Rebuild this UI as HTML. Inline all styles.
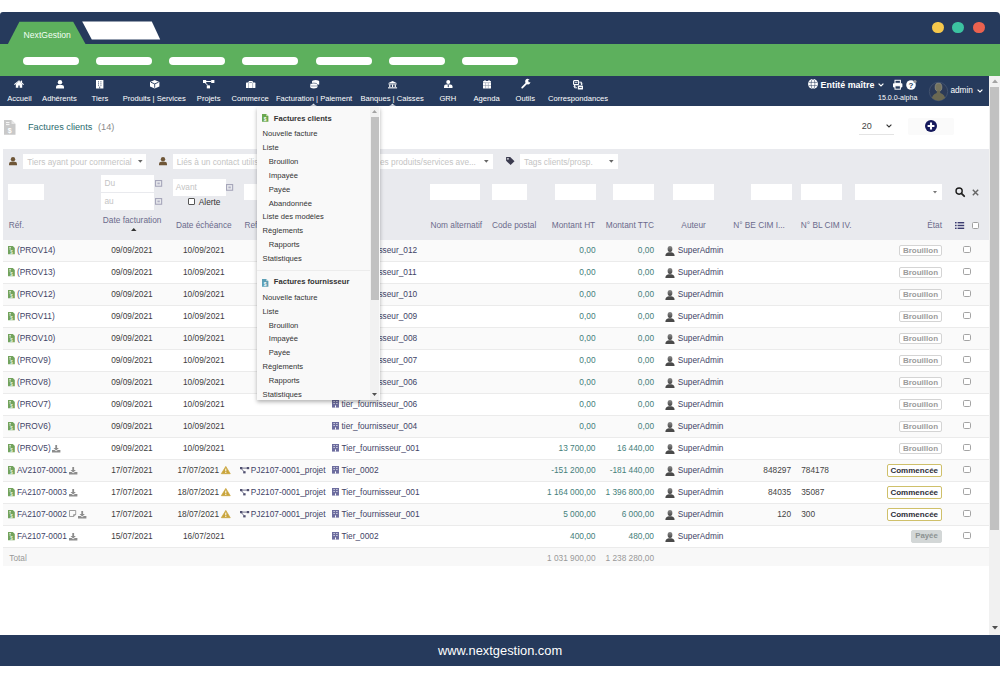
<!DOCTYPE html><html><head><meta charset="utf-8"><title>NextGestion</title><style>
html,body{margin:0;padding:0;background:#fff;width:1000px;height:679px;overflow:hidden}
#root{position:relative;width:1000px;height:679px;overflow:hidden;font-family:"Liberation Sans", sans-serif}
.a{position:absolute}
.t{position:absolute;line-height:1;white-space:nowrap;font-family:"Liberation Sans", sans-serif}
.badge{position:absolute;box-sizing:border-box;border-radius:2px;font-family:"Liberation Sans", sans-serif;font-weight:bold;font-size:7.8px;line-height:10px;text-align:center;white-space:nowrap}
svg{overflow:visible}
</style></head><body><div id="root"><div class="a" style="left:0px;top:12px;width:1000px;height:32px;background:#263a5c;border-radius:3px 4px 0 0"></div>
<svg class="a" style="left:0px;top:12px;" width="200" height="33" viewBox="0 0 200 33"><path d="M7.9,32 L19.4,9.8 L73.2,9.8 L85.5,32 Z" fill="#5db05d"/><path d="M82.2,9.6 L151.8,9.6 L160.2,27.4 L91.8,27.4 Z" fill="#fff"/></svg>
<div class="t" style="left:23.60px;top:30.82px;font-size:8.6px;color:#f2fff2;font-weight:normal;">NextGestion</div>
<div class="a" style="left:932.2px;top:21.8px;width:11.599999999999909px;height:11.599999999999998px;background:#f6c84c;border-radius:50%"></div>
<div class="a" style="left:952.2px;top:21.8px;width:11.599999999999909px;height:11.599999999999998px;background:#3cc3a1;border-radius:50%"></div>
<div class="a" style="left:973.4000000000001px;top:21.8px;width:11.599999999999909px;height:11.599999999999998px;background:#ec624f;border-radius:50%"></div>
<div class="a" style="left:0px;top:43.5px;width:1000px;height:32.0px;background:#5db05d"></div>
<div class="a" style="left:22.5px;top:57px;width:56.0px;height:8px;background:#fff;border-radius:4px"></div>
<div class="a" style="left:95.8px;top:57px;width:56.000000000000014px;height:8px;background:#fff;border-radius:4px"></div>
<div class="a" style="left:169.1px;top:57px;width:56.0px;height:8px;background:#fff;border-radius:4px"></div>
<div class="a" style="left:242.4px;top:57px;width:55.99999999999997px;height:8px;background:#fff;border-radius:4px"></div>
<div class="a" style="left:315.7px;top:57px;width:56.0px;height:8px;background:#fff;border-radius:4px"></div>
<div class="a" style="left:389.0px;top:57px;width:56.0px;height:8px;background:#fff;border-radius:4px"></div>
<div class="a" style="left:462.3px;top:57px;width:55.99999999999994px;height:8px;background:#fff;border-radius:4px"></div>
<div class="a" style="left:0px;top:76px;width:989px;height:30px;background:#263a5c"></div>
<svg class="a" style="left:14.1px;top:80.4px;" width="10" height="7.8" viewBox="0 0 10 7.8"><path d="M5,0.2 L10,4.3 L9.3,5 L5,1.6 L0.7,5 L0,4.3 Z" fill="#ffffff"/><path d="M1.8,4 L5,1.5 L8.2,4 L8.2,7.8 L5.7,7.8 L5.7,5.5 L4.3,5.5 L4.3,7.8 L1.8,7.8 Z" fill="#ffffff"/><rect x="6.9" y="0.6" width="1.2" height="2.4" fill="#ffffff"/></svg>
<svg class="a" style="left:55.6px;top:80.2px;" width="8" height="8.5" viewBox="0 0 8 8.5"><circle cx="4" cy="2.2" r="2.2" fill="#ffffff"/><path d="M0,8.5 L0,7 Q0,4.9 2.2,4.9 L5.8,4.9 Q8,4.9 8,7 L8,8.5 Z" fill="#ffffff"/></svg>
<svg class="a" style="left:96px;top:80.1px;" width="7.4" height="8.5" viewBox="0 0 7.4 8.5"><rect x="0" y="0" width="7.4" height="8.5" fill="#ffffff"/><g fill="#263a5c" opacity="0.8"><rect x="2" y="1.3" width="1" height="1.1"/><rect x="4.4" y="1.3" width="1" height="1.1"/><rect x="2" y="3.3" width="1" height="1.1"/><rect x="4.4" y="3.3" width="1" height="1.1"/><rect x="2" y="5.2" width="0.9" height="0.9"/><rect x="4.5" y="5.2" width="0.9" height="0.9"/><rect x="3.2" y="6.6" width="1" height="1.9"/></g></svg>
<svg class="a" style="left:149.8px;top:80.2px;" width="9.4" height="8.4" viewBox="0 0 9.4 8.4"><path d="M4.7,0 L9.4,2 L9.4,6.4 L4.7,8.4 L0,6.4 L0,2 Z" fill="#ffffff"/><path d="M0.8,2.2 L4.7,3.9 L8.6,2.2 M4.7,3.9 L4.7,7.8" stroke="#263a5c" stroke-width="0.9" fill="none"/></svg>
<svg class="a" style="left:203px;top:80.2px;" width="11.4" height="8.4" viewBox="0 0 11.4 8.4"><rect x="0" y="0" width="3.2" height="3" fill="#ffffff"/><rect x="8.2" y="0" width="3.2" height="3" fill="#ffffff"/><rect x="3.8" y="5.4" width="3.2" height="3" fill="#ffffff"/><path d="M3,1.5 L8.3,1.5 M2,2.6 L5,5.6" stroke="#ffffff" stroke-width="1"/></svg>
<svg class="a" style="left:245.6px;top:81.2px;" width="9.4" height="7" viewBox="0 0 9.4 7"><rect x="0" y="1.6" width="9.4" height="5.4" rx="0.6" fill="#ffffff"/><path d="M3,1.8 L3,0.5 L6.4,0.5 L6.4,1.8" stroke="#ffffff" stroke-width="1" fill="none"/><rect x="2.3" y="2" width="0.7" height="5" fill="#263a5c" opacity="0.5"/><rect x="6.4" y="2" width="0.7" height="5" fill="#263a5c" opacity="0.5"/></svg>
<svg class="a" style="left:309.6px;top:80.2px;" width="9.4" height="8.4" viewBox="0 0 9.4 8.4"><ellipse cx="5.6" cy="1.6" rx="3.6" ry="1.6" fill="#ffffff"/><rect x="2" y="1.6" width="7.2" height="3" fill="#ffffff"/><ellipse cx="3.8" cy="4.6" rx="3.6" ry="1.5" fill="#ffffff" stroke="#263a5c" stroke-width="0.6"/><rect x="0.2" y="4.6" width="7.2" height="2.4" fill="#ffffff"/><ellipse cx="3.8" cy="7" rx="3.6" ry="1.4" fill="#ffffff"/><path d="M0.3,6 L7.3,6" stroke="#263a5c" stroke-width="0.5"/></svg>
<svg class="a" style="left:387.7px;top:80.8px;" width="9.1" height="7.4" viewBox="0 0 9.1 7.4"><path d="M4.55,0 L9.1,2.2 L0,2.2 Z" fill="#ffffff"/><rect x="0.5" y="2.6" width="8.1" height="0.9" fill="#ffffff"/><rect x="1.2" y="3.5" width="1.2" height="2.6" fill="#ffffff"/><rect x="3.95" y="3.5" width="1.2" height="2.6" fill="#ffffff"/><rect x="6.7" y="3.5" width="1.2" height="2.6" fill="#ffffff"/><rect x="0" y="6.3" width="9.1" height="1.1" fill="#ffffff"/></svg>
<svg class="a" style="left:443.8px;top:80.4px;" width="8.5" height="8.1" viewBox="0 0 8.5 8.1"><circle cx="4.25" cy="2" r="2" fill="#ffffff"/><path d="M0,8.1 L0,6.6 Q0,4.5 2,4.5 L6.5,4.5 Q8.5,4.5 8.5,6.6 L8.5,8.1 Z" fill="#ffffff"/><path d="M4.25,4.6 L3.5,6 L4.25,7.6 L5,6 Z" fill="#263a5c"/></svg>
<svg class="a" style="left:483px;top:80px;" width="8" height="8.5" viewBox="0 0 8 8.5"><rect x="0" y="1" width="8" height="7.5" rx="0.5" fill="#ffffff"/><rect x="1.5" y="0" width="1" height="1.6" fill="#ffffff"/><rect x="5.5" y="0" width="1" height="1.6" fill="#ffffff"/><path d="M0,2.6 L8,2.6 M2.6,3 L2.6,8.5 M5.3,3 L5.3,8.5 M0,5.5 L8,5.5" stroke="#263a5c" stroke-width="0.5" opacity="0.6"/></svg>
<svg class="a" style="left:520.6px;top:80px;" width="9.6" height="8.5" viewBox="0 0 9.6 8.5"><path d="M1.2,7.6 L5.4,3.4" stroke="#ffffff" stroke-width="1.8" stroke-linecap="round"/><path d="M5.4,3.4 A2.4,2.4 0 1 1 8.9,1.8 L7.6,2.9 L6.7,2.1 L7.6,1 A2.4,2.4 0 0 0 5.4,3.4 Z" fill="#ffffff"/><circle cx="7" cy="2.3" r="2.2" fill="#ffffff"/><path d="M7.2,0 L9.6,0 L9.6,2.2 L7.6,2.2 Z" fill="#263a5c"/></svg>
<svg class="a" style="left:573.4px;top:80.2px;" width="10.4" height="10" viewBox="0 0 10.4 10"><rect x="0.6" y="0.6" width="5" height="4" rx="0.6" fill="none" stroke="#ffffff" stroke-width="1.1"/><path d="M1.8,2.6 L4.4,2.6" stroke="#ffffff" stroke-width="0.8"/><path d="M6.4,2.2 L8.6,2.2 L8.6,4.6 M7.7,3.7 L8.6,4.8 L9.5,3.7" stroke="#ffffff" stroke-width="1" fill="none"/><rect x="4.8" y="5.4" width="5.2" height="4.2" rx="0.6" fill="#ffffff"/><path d="M6,7.5 L8.8,7.5" stroke="#263a5c" stroke-width="0.8"/><path d="M4,7.8 L1.6,7.8 L1.6,5.4 M0.7,6.5 L1.6,5.3 L2.5,6.5" stroke="#ffffff" stroke-width="1" fill="none"/></svg>
<div class="t" style="left:-180.60px;width:400px;text-align:center;top:95.07px;font-size:7.6px;color:#fff;font-weight:normal;">Accueil</div>
<div class="t" style="left:-140.60px;width:400px;text-align:center;top:95.07px;font-size:7.6px;color:#fff;font-weight:normal;">Adhérents</div>
<div class="t" style="left:-100.10px;width:400px;text-align:center;top:95.07px;font-size:7.6px;color:#fff;font-weight:normal;">Tiers</div>
<div class="t" style="left:-45.75px;width:400px;text-align:center;top:95.07px;font-size:7.6px;color:#fff;font-weight:normal;">Produits | Services</div>
<div class="t" style="left:8.70px;width:400px;text-align:center;top:95.07px;font-size:7.6px;color:#fff;font-weight:normal;">Projets</div>
<div class="t" style="left:50.10px;width:400px;text-align:center;top:95.07px;font-size:7.6px;color:#fff;font-weight:normal;">Commerce</div>
<div class="t" style="left:114.10px;width:400px;text-align:center;top:95.07px;font-size:7.6px;color:#fff;font-weight:normal;">Facturation | Paiement</div>
<div class="t" style="left:192.10px;width:400px;text-align:center;top:95.07px;font-size:7.6px;color:#fff;font-weight:normal;">Banques | Caisses</div>
<div class="t" style="left:247.90px;width:400px;text-align:center;top:95.07px;font-size:7.6px;color:#fff;font-weight:normal;">GRH</div>
<div class="t" style="left:286.60px;width:400px;text-align:center;top:95.07px;font-size:7.6px;color:#fff;font-weight:normal;">Agenda</div>
<div class="t" style="left:325.25px;width:400px;text-align:center;top:95.07px;font-size:7.6px;color:#fff;font-weight:normal;">Outils</div>
<div class="t" style="left:378.00px;width:400px;text-align:center;top:95.07px;font-size:7.6px;color:#fff;font-weight:normal;">Correspondances</div>
<svg class="a" style="left:310.3px;top:103.2px;" width="7" height="2.8" viewBox="0 0 7 2.8"><path d="M0,2.8 Q2.2,2.4 3.5,0.6 Q4.8,2.4 7,2.8 Z" fill="#e6e9ee"/></svg>
<svg class="a" style="left:388.9px;top:103.2px;" width="7" height="2.8" viewBox="0 0 7 2.8"><path d="M0,2.8 Q2.2,2.4 3.5,0.6 Q4.8,2.4 7,2.8 Z" fill="#e6e9ee"/></svg>
<svg class="a" style="left:808.2px;top:79px;" width="10" height="10" viewBox="0 0 10 10"><circle cx="5" cy="5" r="4.95" fill="#fff"/><path d="M0.8,3.4 L9.2,3.4 M0.8,6.6 L9.2,6.6" stroke="#263a5c" stroke-width="0.7" opacity="0.75"/><ellipse cx="5" cy="5" rx="1.9" ry="4.9" fill="none" stroke="#263a5c" stroke-width="0.7" opacity="0.75"/></svg>
<div class="t" style="left:820.60px;top:80.97px;font-size:8.9px;color:#fff;font-weight:bold;">Entité maître</div>
<svg class="a" style="left:878px;top:83.2px;" width="6" height="4" viewBox="0 0 6 4"><path d="M0.6,0.6 L3,3 L5.4,0.6" stroke="#fff" stroke-width="1.2" fill="none"/></svg>
<svg class="a" style="left:893px;top:79.6px;" width="9.4" height="9.4" viewBox="0 0 9.4 9.4"><rect x="2" y="0.3" width="5.4" height="3" fill="none" stroke="#fff" stroke-width="1"/><rect x="0" y="3.2" width="9.4" height="4.2" rx="0.8" fill="#fff"/><rect x="2" y="5.8" width="5.4" height="3.4" fill="#263a5c" stroke="#fff" stroke-width="1"/></svg>
<svg class="a" style="left:906px;top:79.6px;" width="10" height="10" viewBox="0 0 10 10"><circle cx="5" cy="5" r="4.8" fill="#fff"/><text x="5" y="8.3" text-anchor="middle" font-family="Liberation Sans" font-weight="bold" font-size="8" fill="#263a5c">?</text><circle cx="9" cy="1.5" r="1.6" fill="#999"/></svg>
<div class="t" style="left:878.00px;top:94.99px;font-size:7.1px;color:#fff;font-weight:normal;">15.0.0-alpha</div>
<svg class="a" style="left:929px;top:81.5px;" width="19" height="19" viewBox="0 0 19 19"><defs><clipPath id="av"><circle cx="9.5" cy="9.5" r="9.2"/></clipPath></defs><circle cx="9.5" cy="9.5" r="9.2" fill="#2b3a57" stroke="#4b5a76" stroke-width="0.7"/><g clip-path="url(#av)"><ellipse cx="9.5" cy="5.2" rx="3.4" ry="4.1" fill="#75735e" stroke="#9a9a90" stroke-width="0.6"/><path d="M8,8.5 L11,8.5 L11.3,11 Q16,12 16.8,19 L2.2,19 Q3,12 7.7,11 Z" fill="#6a6852"/></g></svg>
<div class="t" style="left:950.40px;top:85.97px;font-size:8.3px;color:#fff;font-weight:normal;">admin</div>
<svg class="a" style="left:977px;top:89px;" width="6" height="4" viewBox="0 0 6 4"><path d="M0.6,0.6 L3,3 L5.4,0.6" stroke="#fff" stroke-width="1.2" fill="none"/></svg>
<div class="a" style="left:989px;top:75.5px;width:11px;height:559.0px;background:#f1f1f1"></div>
<div class="a" style="left:990px;top:86.5px;width:9px;height:443.0px;background:#c1c1c1"></div>
<svg class="a" style="left:991.5px;top:79.4px;" width="6" height="4" viewBox="0 0 6 4"><path d="M0,4 L3,0.5 L6,4 Z" fill="#a3a3a3"/></svg>
<svg class="a" style="left:991.5px;top:626px;" width="6" height="4" viewBox="0 0 6 4"><path d="M0,0 L3,3.5 L6,0 Z" fill="#505050"/></svg>
<div class="a" style="left:0px;top:635px;width:1000px;height:31px;background:#263a5c"></div>
<div class="t" style="left:300.00px;width:400px;text-align:center;top:645.12px;font-size:12.85px;color:#fff;font-weight:normal;">www.nextgestion.com</div>
<svg class="a" style="left:3.9px;top:119.9px;" width="11.5" height="14.7" viewBox="0 0 11.5 14.7"><path d="M0,0 L7.5,0 L11.5,4 L11.5,14.7 L0,14.7 Z" fill="#c9c9c9"/><path d="M7.5,0 L7.5,4 L11.5,4" fill="#e6e6e6"/><rect x="2" y="2.2" width="3.5" height="0.9" fill="#fff"/><rect x="2" y="4.2" width="3.5" height="0.9" fill="#fff"/><text x="5.8" y="12.6" text-anchor="middle" font-family="Liberation Sans" font-weight="bold" font-size="7" fill="#fff">$</text></svg>
<div class="t" style="left:28.00px;top:123.11px;font-size:9.2px;color:#2c6b6e;font-weight:normal;">Factures clients</div>
<div class="t" style="left:98.00px;top:123.11px;font-size:9.2px;color:#8a8a8a;font-weight:normal;">(14)</div>
<div class="t" style="left:861.70px;top:121.58px;font-size:9px;color:#444;font-weight:normal;">20</div>
<svg class="a" style="left:886px;top:123.5px;" width="6" height="4" viewBox="0 0 6 4"><path d="M0.6,0.6 L3,3 L5.4,0.6" stroke="#333" stroke-width="1.1" fill="none"/></svg>
<div class="a" style="left:859px;top:133.8px;width:35px;height:0.799999999999983px;background:#e4e4e4"></div>
<div class="a" style="left:908px;top:117.8px;width:46px;height:16.799999999999997px;background:#fafafa;border-radius:2px"></div>
<svg class="a" style="left:925px;top:119.5px;" width="12" height="12" viewBox="0 0 12 12"><circle cx="6" cy="6" r="6" fill="#15195c"/><path d="M6,2.6 L6,9.4 M2.6,6 L9.4,6" stroke="#fff" stroke-width="2.1"/></svg>
<div class="a" style="left:3px;top:149px;width:985.5px;height:91px;background:#e9eaee"></div>
<svg class="a" style="left:8.75px;top:156.8px;" width="8" height="8.2" viewBox="0 0 8 8.2"><circle cx="4" cy="2.2" r="2.2" fill="#6f5637"/><path d="M0,8.2 L0,7 Q0,4.8 2.2,4.8 L5.8,4.8 Q8,4.8 8,7 L8,8.2 Z" fill="#6f5637"/></svg>
<svg class="a" style="left:158.9px;top:156.8px;" width="8" height="8.2" viewBox="0 0 8 8.2"><circle cx="4" cy="2.2" r="2.2" fill="#6f5637"/><path d="M0,8.2 L0,7 Q0,4.8 2.2,4.8 L5.8,4.8 Q8,4.8 8,7 L8,8.2 Z" fill="#6f5637"/></svg>
<div class="a" style="left:23.25px;top:153.6px;width:123.0px;height:15.200000000000017px;background:#fff"></div>
<div class="t" style="left:27.25px;top:157.97px;font-size:8.3px;color:#c4c4c4;font-weight:normal;">Tiers ayant pour commercial</div>
<svg class="a" style="left:137.75px;top:159.89999999999998px;" width="4.6" height="2.8" viewBox="0 0 4.6 2.8"><path d="M0,0 L4.6,0 L2.3,2.8 Z" fill="#666"/></svg>
<div class="a" style="left:173.3px;top:153.6px;width:83.69999999999999px;height:15.200000000000017px;background:#fff"></div>
<div class="t" style="left:176.70px;top:157.97px;font-size:8.3px;color:#c4c4c4;font-weight:normal;">Liés à un contact utilisateur</div>
<div class="a" style="left:257px;top:153.6px;width:235.8px;height:15.200000000000017px;background:#fff"></div>
<svg class="a" style="left:484.3px;top:160.3px;" width="4.6" height="2.8" viewBox="0 0 4.6 2.8"><path d="M0,0 L4.6,0 L2.3,2.8 Z" fill="#666"/></svg>
<div class="t" style="left:380.00px;top:157.97px;font-size:8.3px;color:#c4c4c4;font-weight:normal;">es produits/services ave...</div>
<svg class="a" style="left:505.6px;top:157px;" width="9" height="8" viewBox="0 0 9 8.2"><path d="M0,0 L4.2,0 L8.6,4.4 L4.6,8.2 L0,3.8 Z" fill="#3b3b4f"/><circle cx="1.9" cy="1.9" r="0.9" fill="#e9eaee"/></svg>
<div class="a" style="left:520px;top:153.8px;width:97.89999999999998px;height:15.199999999999989px;background:#fff"></div>
<div class="t" style="left:524.00px;top:158.17px;font-size:8.3px;color:#c4c4c4;font-weight:normal;">Tags clients/prosp.</div>
<svg class="a" style="left:609.4px;top:160.1px;" width="4.6" height="2.8" viewBox="0 0 4.6 2.8"><path d="M0,0 L4.6,0 L2.3,2.8 Z" fill="#666"/></svg>
<div class="a" style="left:8.25px;top:183.9px;width:36.0px;height:16.099999999999994px;background:#fff"></div>
<div class="a" style="left:100.75px;top:174.8px;width:53.55000000000001px;height:17.0px;background:#fff"></div>
<div class="t" style="left:104.50px;top:179.17px;font-size:8.3px;color:#c4c4c4;font-weight:normal;">Du</div>
<div class="a" style="left:100.75px;top:193px;width:53.55000000000001px;height:16.599999999999994px;background:#fff"></div>
<div class="t" style="left:104.50px;top:196.57px;font-size:8.3px;color:#c4c4c4;font-weight:normal;">au</div>
<svg class="a" style="left:154.9px;top:179.9px;" width="7.2" height="6.8" viewBox="0 0 7.2 6.8"><rect x="0.55" y="0.55" width="6.1" height="5.7" fill="none" stroke="#a6a6ba" stroke-width="1.1"/><rect x="2.4" y="2.5" width="2.4" height="1.8" fill="#b0b0c4"/></svg>
<svg class="a" style="left:154.9px;top:198.4px;" width="7.2" height="6.8" viewBox="0 0 7.2 6.8"><rect x="0.55" y="0.55" width="6.1" height="5.7" fill="none" stroke="#a6a6ba" stroke-width="1.1"/><rect x="2.4" y="2.5" width="2.4" height="1.8" fill="#b0b0c4"/></svg>
<div class="a" style="left:173px;top:178.5px;width:52.5px;height:17.0px;background:#fff"></div>
<div class="t" style="left:175.80px;top:183.17px;font-size:8.3px;color:#c4c4c4;font-weight:normal;">Avant</div>
<svg class="a" style="left:226.3px;top:183.6px;" width="7.2" height="6.8" viewBox="0 0 7.2 6.8"><rect x="0.55" y="0.55" width="6.1" height="5.7" fill="none" stroke="#a6a6ba" stroke-width="1.1"/><rect x="2.4" y="2.5" width="2.4" height="1.8" fill="#b0b0c4"/></svg>
<div class="a" style="left:188.3px;top:198px;width:6.699999999999989px;height:6.900000000000006px;background:#fff;border:0.8px solid #555;border-radius:1px;box-sizing:border-box"></div>
<div class="t" style="left:198.80px;top:197.87px;font-size:8.3px;color:#333;font-weight:normal;">Alerte</div>
<div class="a" style="left:244px;top:183.9px;width:56px;height:16.099999999999994px;background:#fff"></div>
<div class="a" style="left:430px;top:183.9px;width:50px;height:16.099999999999994px;background:#fff"></div>
<div class="a" style="left:491.75px;top:183.9px;width:35.25px;height:16.099999999999994px;background:#fff"></div>
<div class="a" style="left:554.5px;top:183.9px;width:41.700000000000045px;height:16.099999999999994px;background:#fff"></div>
<div class="a" style="left:613.2px;top:183.9px;width:40.799999999999955px;height:16.099999999999994px;background:#fff"></div>
<div class="a" style="left:673.2px;top:183.9px;width:40.799999999999955px;height:16.099999999999994px;background:#fff"></div>
<div class="a" style="left:750.8px;top:183.9px;width:41.200000000000045px;height:16.099999999999994px;background:#fff"></div>
<div class="a" style="left:800.8px;top:183.9px;width:41.200000000000045px;height:16.099999999999994px;background:#fff"></div>
<div class="a" style="left:854.8px;top:184px;width:87.20000000000005px;height:16px;background:#fff"></div>
<svg class="a" style="left:932.5px;top:191px;" width="4" height="2.4" viewBox="0 0 4 2.4"><path d="M0,0 L4,0 L2,2.4 Z" fill="#777"/></svg>
<svg class="a" style="left:955px;top:187px;" width="10" height="10" viewBox="0 0 10 10"><circle cx="4.1" cy="4.1" r="3.1" fill="none" stroke="#1a1a1a" stroke-width="1.35"/><path d="M6.4,6.4 L9.2,9.2" stroke="#222" stroke-width="1.8" stroke-linecap="round"/></svg>
<svg class="a" style="left:972.4px;top:189.1px;" width="7" height="7" viewBox="0 0 7 7"><path d="M0.8,0.8 L6.2,6.2 M6.2,0.8 L0.8,6.2" stroke="#666" stroke-width="1.4"/></svg>
<div class="t" style="left:8.75px;top:220.97px;font-size:8.3px;color:#6b6b8c;font-weight:normal;">Réf.</div>
<div class="t" style="left:102.80px;top:216.07px;font-size:8.3px;color:#6b6b8c;font-weight:normal;">Date facturation</div>
<svg class="a" style="left:130.5px;top:228px;" width="5.5" height="3" viewBox="0 0 5.5 3"><path d="M0,3 L2.75,0 L5.5,3 Z" fill="#333"/></svg>
<div class="t" style="left:175.90px;top:220.77px;font-size:8.3px;color:#6b6b8c;font-weight:normal;">Date échéance</div>
<div class="t" style="left:244.40px;top:220.77px;font-size:8.3px;color:#6b6b8c;font-weight:normal;">Ref. client</div>
<div class="t" style="left:430.50px;top:220.97px;font-size:8.3px;color:#6b6b8c;font-weight:normal;">Nom alternatif</div>
<div class="t" style="left:492.00px;top:220.97px;font-size:8.3px;color:#6b6b8c;font-weight:normal;">Code postal</div>
<div class="t" style="right:404.80px;top:220.97px;font-size:8.3px;color:#6b6b8c;font-weight:normal;">Montant HT</div>
<div class="t" style="right:346.00px;top:220.97px;font-size:8.3px;color:#6b6b8c;font-weight:normal;">Montant TTC</div>
<div class="t" style="left:493.60px;width:400px;text-align:center;top:220.97px;font-size:8.3px;color:#6b6b8c;font-weight:normal;">Auteur</div>
<div class="t" style="left:733.20px;top:220.97px;font-size:8.3px;color:#6b6b8c;font-weight:normal;">N° BE CIM I...</div>
<div class="t" style="left:800.80px;top:220.97px;font-size:8.3px;color:#6b6b8c;font-weight:normal;">N° BL CIM IV.</div>
<div class="t" style="right:58.00px;top:220.97px;font-size:8.3px;color:#6b6b8c;font-weight:normal;">État</div>
<svg class="a" style="left:954.8px;top:222px;" width="9.2" height="7" viewBox="0 0 9.2 7"><rect x="0" y="0" width="1.6" height="1.4" fill="#3c3c70"/><rect x="2.6" y="0" width="6.6" height="1.4" fill="#3c3c70"/><rect x="0" y="2.8" width="1.6" height="1.4" fill="#3c3c70"/><rect x="2.6" y="2.8" width="6.6" height="1.4" fill="#3c3c70"/><rect x="0" y="5.6" width="1.6" height="1.4" fill="#3c3c70"/><rect x="2.6" y="5.6" width="6.6" height="1.4" fill="#3c3c70"/></svg>
<div class="a" style="left:972px;top:222.3px;width:6.600000000000023px;height:6.699999999999989px;background:#fff;border:1px solid #a0a0a0;border-radius:1.5px;box-sizing:border-box"></div>
<div class="a" style="left:3px;top:240px;width:985.5px;height:22px;background:#fafafa;border-bottom:1px solid #ebebeb;box-sizing:border-box"></div>
<svg class="a" style="left:8.2px;top:245.5px;" width="6.8" height="8.2" viewBox="0 0 6.8 8.2"><path d="M0,0 L4.8,0 L6.8,2 L6.8,8.2 L0,8.2 Z" fill="#72a35c"/><rect x="1.2" y="1.2" width="1.8" height="0.8" fill="#e6f0e0"/><rect x="1.2" y="2.6" width="1.8" height="0.8" fill="#e6f0e0"/><text x="3.6" y="7.6" text-anchor="middle" font-family="Liberation Sans" font-weight="bold" font-size="4.6" fill="#e6f0e0">$</text></svg>
<div class="t" style="left:17.00px;top:246.27px;font-size:8.3px;color:#414366;font-weight:normal;">(PROV14)</div>
<div class="t" style="left:-68.10px;width:400px;text-align:center;top:246.27px;font-size:8.3px;color:#3d3d3d;font-weight:normal;">09/09/2021</div>
<div class="t" style="left:3.75px;width:400px;text-align:center;top:246.27px;font-size:8.3px;color:#3d3d3d;font-weight:normal;">10/09/2021</div>
<svg class="a" style="left:331.9px;top:245.9px;" width="7" height="7.6" viewBox="0 0 7 7.6"><rect x="0" y="0" width="7" height="7.6" fill="#6c6c9e"/><rect x="1.6" y="1" width="1" height="1" fill="#fff"/><rect x="4.4" y="1" width="1" height="1" fill="#fff"/><rect x="1.6" y="3" width="1" height="1" fill="#fff"/><rect x="4.4" y="3" width="1" height="1" fill="#fff"/><rect x="3" y="5.4" width="1" height="2.2" fill="#fff"/></svg>
<div class="t" style="left:341.50px;top:246.27px;font-size:8.3px;color:#414366;font-weight:normal;">tier_fournisseur_012</div>
<div class="t" style="right:404.50px;top:246.27px;font-size:8.3px;color:#44807a;font-weight:normal;">0,00</div>
<div class="t" style="right:346.00px;top:246.27px;font-size:8.3px;color:#44807a;font-weight:normal;">0,00</div>
<svg class="a" style="left:664.5px;top:245.6px;" width="10" height="10" viewBox="0 0 10 10"><defs><linearGradient id="pg" x1="0" y1="0" x2="0" y2="1"><stop offset="0" stop-color="#8a8a8a"/><stop offset="1" stop-color="#444"/></linearGradient></defs><ellipse cx="5" cy="3.1" rx="2.4" ry="3" fill="url(#pg)"/><path d="M0.4,10 Q0.4,6.6 3.6,6.2 L6.4,6.2 Q9.6,6.6 9.6,10 Z" fill="#4a4a4a"/></svg>
<div class="t" style="left:677.70px;top:246.27px;font-size:8.3px;color:#414366;font-weight:normal;">SuperAdmin</div>
<div class="badge" style="left:899.25px;top:244.50px;width:42.5px;height:11.8px;border:1px solid #d4d4d4;color:#9c9c9c;background:#fff;line-height:10.2px;font-size:8px">Brouillon</div>
<div class="a" style="left:963.2px;top:246px;width:7.599999999999909px;height:7px;background:#fff;border:1px solid #a4a4a4;border-radius:1.6px;box-sizing:border-box"></div>
<div class="a" style="left:3px;top:262px;width:985.5px;height:22px;background:#ffffff;border-bottom:1px solid #ebebeb;box-sizing:border-box"></div>
<svg class="a" style="left:8.2px;top:267.5px;" width="6.8" height="8.2" viewBox="0 0 6.8 8.2"><path d="M0,0 L4.8,0 L6.8,2 L6.8,8.2 L0,8.2 Z" fill="#72a35c"/><rect x="1.2" y="1.2" width="1.8" height="0.8" fill="#e6f0e0"/><rect x="1.2" y="2.6" width="1.8" height="0.8" fill="#e6f0e0"/><text x="3.6" y="7.6" text-anchor="middle" font-family="Liberation Sans" font-weight="bold" font-size="4.6" fill="#e6f0e0">$</text></svg>
<div class="t" style="left:17.00px;top:268.27px;font-size:8.3px;color:#414366;font-weight:normal;">(PROV13)</div>
<div class="t" style="left:-68.10px;width:400px;text-align:center;top:268.27px;font-size:8.3px;color:#3d3d3d;font-weight:normal;">09/09/2021</div>
<div class="t" style="left:3.75px;width:400px;text-align:center;top:268.27px;font-size:8.3px;color:#3d3d3d;font-weight:normal;">10/09/2021</div>
<svg class="a" style="left:331.9px;top:267.9px;" width="7" height="7.6" viewBox="0 0 7 7.6"><rect x="0" y="0" width="7" height="7.6" fill="#6c6c9e"/><rect x="1.6" y="1" width="1" height="1" fill="#fff"/><rect x="4.4" y="1" width="1" height="1" fill="#fff"/><rect x="1.6" y="3" width="1" height="1" fill="#fff"/><rect x="4.4" y="3" width="1" height="1" fill="#fff"/><rect x="3" y="5.4" width="1" height="2.2" fill="#fff"/></svg>
<div class="t" style="left:341.50px;top:268.27px;font-size:8.3px;color:#414366;font-weight:normal;">tier_fournisseur_011</div>
<div class="t" style="right:404.50px;top:268.27px;font-size:8.3px;color:#44807a;font-weight:normal;">0,00</div>
<div class="t" style="right:346.00px;top:268.27px;font-size:8.3px;color:#44807a;font-weight:normal;">0,00</div>
<svg class="a" style="left:664.5px;top:267.6px;" width="10" height="10" viewBox="0 0 10 10"><defs><linearGradient id="pg" x1="0" y1="0" x2="0" y2="1"><stop offset="0" stop-color="#8a8a8a"/><stop offset="1" stop-color="#444"/></linearGradient></defs><ellipse cx="5" cy="3.1" rx="2.4" ry="3" fill="url(#pg)"/><path d="M0.4,10 Q0.4,6.6 3.6,6.2 L6.4,6.2 Q9.6,6.6 9.6,10 Z" fill="#4a4a4a"/></svg>
<div class="t" style="left:677.70px;top:268.27px;font-size:8.3px;color:#414366;font-weight:normal;">SuperAdmin</div>
<div class="badge" style="left:899.25px;top:266.50px;width:42.5px;height:11.8px;border:1px solid #d4d4d4;color:#9c9c9c;background:#fff;line-height:10.2px;font-size:8px">Brouillon</div>
<div class="a" style="left:963.2px;top:268px;width:7.599999999999909px;height:7px;background:#fff;border:1px solid #a4a4a4;border-radius:1.6px;box-sizing:border-box"></div>
<div class="a" style="left:3px;top:284px;width:985.5px;height:22px;background:#fafafa;border-bottom:1px solid #ebebeb;box-sizing:border-box"></div>
<svg class="a" style="left:8.2px;top:289.5px;" width="6.8" height="8.2" viewBox="0 0 6.8 8.2"><path d="M0,0 L4.8,0 L6.8,2 L6.8,8.2 L0,8.2 Z" fill="#72a35c"/><rect x="1.2" y="1.2" width="1.8" height="0.8" fill="#e6f0e0"/><rect x="1.2" y="2.6" width="1.8" height="0.8" fill="#e6f0e0"/><text x="3.6" y="7.6" text-anchor="middle" font-family="Liberation Sans" font-weight="bold" font-size="4.6" fill="#e6f0e0">$</text></svg>
<div class="t" style="left:17.00px;top:290.27px;font-size:8.3px;color:#414366;font-weight:normal;">(PROV12)</div>
<div class="t" style="left:-68.10px;width:400px;text-align:center;top:290.27px;font-size:8.3px;color:#3d3d3d;font-weight:normal;">09/09/2021</div>
<div class="t" style="left:3.75px;width:400px;text-align:center;top:290.27px;font-size:8.3px;color:#3d3d3d;font-weight:normal;">10/09/2021</div>
<svg class="a" style="left:331.9px;top:289.9px;" width="7" height="7.6" viewBox="0 0 7 7.6"><rect x="0" y="0" width="7" height="7.6" fill="#6c6c9e"/><rect x="1.6" y="1" width="1" height="1" fill="#fff"/><rect x="4.4" y="1" width="1" height="1" fill="#fff"/><rect x="1.6" y="3" width="1" height="1" fill="#fff"/><rect x="4.4" y="3" width="1" height="1" fill="#fff"/><rect x="3" y="5.4" width="1" height="2.2" fill="#fff"/></svg>
<div class="t" style="left:341.50px;top:290.27px;font-size:8.3px;color:#414366;font-weight:normal;">tier_fournisseur_010</div>
<div class="t" style="right:404.50px;top:290.27px;font-size:8.3px;color:#44807a;font-weight:normal;">0,00</div>
<div class="t" style="right:346.00px;top:290.27px;font-size:8.3px;color:#44807a;font-weight:normal;">0,00</div>
<svg class="a" style="left:664.5px;top:289.6px;" width="10" height="10" viewBox="0 0 10 10"><defs><linearGradient id="pg" x1="0" y1="0" x2="0" y2="1"><stop offset="0" stop-color="#8a8a8a"/><stop offset="1" stop-color="#444"/></linearGradient></defs><ellipse cx="5" cy="3.1" rx="2.4" ry="3" fill="url(#pg)"/><path d="M0.4,10 Q0.4,6.6 3.6,6.2 L6.4,6.2 Q9.6,6.6 9.6,10 Z" fill="#4a4a4a"/></svg>
<div class="t" style="left:677.70px;top:290.27px;font-size:8.3px;color:#414366;font-weight:normal;">SuperAdmin</div>
<div class="badge" style="left:899.25px;top:288.50px;width:42.5px;height:11.8px;border:1px solid #d4d4d4;color:#9c9c9c;background:#fff;line-height:10.2px;font-size:8px">Brouillon</div>
<div class="a" style="left:963.2px;top:290px;width:7.599999999999909px;height:7px;background:#fff;border:1px solid #a4a4a4;border-radius:1.6px;box-sizing:border-box"></div>
<div class="a" style="left:3px;top:306px;width:985.5px;height:22px;background:#ffffff;border-bottom:1px solid #ebebeb;box-sizing:border-box"></div>
<svg class="a" style="left:8.2px;top:311.5px;" width="6.8" height="8.2" viewBox="0 0 6.8 8.2"><path d="M0,0 L4.8,0 L6.8,2 L6.8,8.2 L0,8.2 Z" fill="#72a35c"/><rect x="1.2" y="1.2" width="1.8" height="0.8" fill="#e6f0e0"/><rect x="1.2" y="2.6" width="1.8" height="0.8" fill="#e6f0e0"/><text x="3.6" y="7.6" text-anchor="middle" font-family="Liberation Sans" font-weight="bold" font-size="4.6" fill="#e6f0e0">$</text></svg>
<div class="t" style="left:17.00px;top:312.27px;font-size:8.3px;color:#414366;font-weight:normal;">(PROV11)</div>
<div class="t" style="left:-68.10px;width:400px;text-align:center;top:312.27px;font-size:8.3px;color:#3d3d3d;font-weight:normal;">09/09/2021</div>
<div class="t" style="left:3.75px;width:400px;text-align:center;top:312.27px;font-size:8.3px;color:#3d3d3d;font-weight:normal;">10/09/2021</div>
<svg class="a" style="left:331.9px;top:311.9px;" width="7" height="7.6" viewBox="0 0 7 7.6"><rect x="0" y="0" width="7" height="7.6" fill="#6c6c9e"/><rect x="1.6" y="1" width="1" height="1" fill="#fff"/><rect x="4.4" y="1" width="1" height="1" fill="#fff"/><rect x="1.6" y="3" width="1" height="1" fill="#fff"/><rect x="4.4" y="3" width="1" height="1" fill="#fff"/><rect x="3" y="5.4" width="1" height="2.2" fill="#fff"/></svg>
<div class="t" style="left:341.50px;top:312.27px;font-size:8.3px;color:#414366;font-weight:normal;">tier_fournisseur_009</div>
<div class="t" style="right:404.50px;top:312.27px;font-size:8.3px;color:#44807a;font-weight:normal;">0,00</div>
<div class="t" style="right:346.00px;top:312.27px;font-size:8.3px;color:#44807a;font-weight:normal;">0,00</div>
<svg class="a" style="left:664.5px;top:311.6px;" width="10" height="10" viewBox="0 0 10 10"><defs><linearGradient id="pg" x1="0" y1="0" x2="0" y2="1"><stop offset="0" stop-color="#8a8a8a"/><stop offset="1" stop-color="#444"/></linearGradient></defs><ellipse cx="5" cy="3.1" rx="2.4" ry="3" fill="url(#pg)"/><path d="M0.4,10 Q0.4,6.6 3.6,6.2 L6.4,6.2 Q9.6,6.6 9.6,10 Z" fill="#4a4a4a"/></svg>
<div class="t" style="left:677.70px;top:312.27px;font-size:8.3px;color:#414366;font-weight:normal;">SuperAdmin</div>
<div class="badge" style="left:899.25px;top:310.50px;width:42.5px;height:11.8px;border:1px solid #d4d4d4;color:#9c9c9c;background:#fff;line-height:10.2px;font-size:8px">Brouillon</div>
<div class="a" style="left:963.2px;top:312px;width:7.599999999999909px;height:7px;background:#fff;border:1px solid #a4a4a4;border-radius:1.6px;box-sizing:border-box"></div>
<div class="a" style="left:3px;top:328px;width:985.5px;height:22px;background:#fafafa;border-bottom:1px solid #ebebeb;box-sizing:border-box"></div>
<svg class="a" style="left:8.2px;top:333.5px;" width="6.8" height="8.2" viewBox="0 0 6.8 8.2"><path d="M0,0 L4.8,0 L6.8,2 L6.8,8.2 L0,8.2 Z" fill="#72a35c"/><rect x="1.2" y="1.2" width="1.8" height="0.8" fill="#e6f0e0"/><rect x="1.2" y="2.6" width="1.8" height="0.8" fill="#e6f0e0"/><text x="3.6" y="7.6" text-anchor="middle" font-family="Liberation Sans" font-weight="bold" font-size="4.6" fill="#e6f0e0">$</text></svg>
<div class="t" style="left:17.00px;top:334.27px;font-size:8.3px;color:#414366;font-weight:normal;">(PROV10)</div>
<div class="t" style="left:-68.10px;width:400px;text-align:center;top:334.27px;font-size:8.3px;color:#3d3d3d;font-weight:normal;">09/09/2021</div>
<div class="t" style="left:3.75px;width:400px;text-align:center;top:334.27px;font-size:8.3px;color:#3d3d3d;font-weight:normal;">10/09/2021</div>
<svg class="a" style="left:331.9px;top:333.9px;" width="7" height="7.6" viewBox="0 0 7 7.6"><rect x="0" y="0" width="7" height="7.6" fill="#6c6c9e"/><rect x="1.6" y="1" width="1" height="1" fill="#fff"/><rect x="4.4" y="1" width="1" height="1" fill="#fff"/><rect x="1.6" y="3" width="1" height="1" fill="#fff"/><rect x="4.4" y="3" width="1" height="1" fill="#fff"/><rect x="3" y="5.4" width="1" height="2.2" fill="#fff"/></svg>
<div class="t" style="left:341.50px;top:334.27px;font-size:8.3px;color:#414366;font-weight:normal;">tier_fournisseur_008</div>
<div class="t" style="right:404.50px;top:334.27px;font-size:8.3px;color:#44807a;font-weight:normal;">0,00</div>
<div class="t" style="right:346.00px;top:334.27px;font-size:8.3px;color:#44807a;font-weight:normal;">0,00</div>
<svg class="a" style="left:664.5px;top:333.6px;" width="10" height="10" viewBox="0 0 10 10"><defs><linearGradient id="pg" x1="0" y1="0" x2="0" y2="1"><stop offset="0" stop-color="#8a8a8a"/><stop offset="1" stop-color="#444"/></linearGradient></defs><ellipse cx="5" cy="3.1" rx="2.4" ry="3" fill="url(#pg)"/><path d="M0.4,10 Q0.4,6.6 3.6,6.2 L6.4,6.2 Q9.6,6.6 9.6,10 Z" fill="#4a4a4a"/></svg>
<div class="t" style="left:677.70px;top:334.27px;font-size:8.3px;color:#414366;font-weight:normal;">SuperAdmin</div>
<div class="badge" style="left:899.25px;top:332.50px;width:42.5px;height:11.8px;border:1px solid #d4d4d4;color:#9c9c9c;background:#fff;line-height:10.2px;font-size:8px">Brouillon</div>
<div class="a" style="left:963.2px;top:334px;width:7.599999999999909px;height:7px;background:#fff;border:1px solid #a4a4a4;border-radius:1.6px;box-sizing:border-box"></div>
<div class="a" style="left:3px;top:350px;width:985.5px;height:22px;background:#ffffff;border-bottom:1px solid #ebebeb;box-sizing:border-box"></div>
<svg class="a" style="left:8.2px;top:355.5px;" width="6.8" height="8.2" viewBox="0 0 6.8 8.2"><path d="M0,0 L4.8,0 L6.8,2 L6.8,8.2 L0,8.2 Z" fill="#72a35c"/><rect x="1.2" y="1.2" width="1.8" height="0.8" fill="#e6f0e0"/><rect x="1.2" y="2.6" width="1.8" height="0.8" fill="#e6f0e0"/><text x="3.6" y="7.6" text-anchor="middle" font-family="Liberation Sans" font-weight="bold" font-size="4.6" fill="#e6f0e0">$</text></svg>
<div class="t" style="left:17.00px;top:356.27px;font-size:8.3px;color:#414366;font-weight:normal;">(PROV9)</div>
<div class="t" style="left:-68.10px;width:400px;text-align:center;top:356.27px;font-size:8.3px;color:#3d3d3d;font-weight:normal;">09/09/2021</div>
<div class="t" style="left:3.75px;width:400px;text-align:center;top:356.27px;font-size:8.3px;color:#3d3d3d;font-weight:normal;">10/09/2021</div>
<svg class="a" style="left:331.9px;top:355.9px;" width="7" height="7.6" viewBox="0 0 7 7.6"><rect x="0" y="0" width="7" height="7.6" fill="#6c6c9e"/><rect x="1.6" y="1" width="1" height="1" fill="#fff"/><rect x="4.4" y="1" width="1" height="1" fill="#fff"/><rect x="1.6" y="3" width="1" height="1" fill="#fff"/><rect x="4.4" y="3" width="1" height="1" fill="#fff"/><rect x="3" y="5.4" width="1" height="2.2" fill="#fff"/></svg>
<div class="t" style="left:341.50px;top:356.27px;font-size:8.3px;color:#414366;font-weight:normal;">tier_fournisseur_007</div>
<div class="t" style="right:404.50px;top:356.27px;font-size:8.3px;color:#44807a;font-weight:normal;">0,00</div>
<div class="t" style="right:346.00px;top:356.27px;font-size:8.3px;color:#44807a;font-weight:normal;">0,00</div>
<svg class="a" style="left:664.5px;top:355.6px;" width="10" height="10" viewBox="0 0 10 10"><defs><linearGradient id="pg" x1="0" y1="0" x2="0" y2="1"><stop offset="0" stop-color="#8a8a8a"/><stop offset="1" stop-color="#444"/></linearGradient></defs><ellipse cx="5" cy="3.1" rx="2.4" ry="3" fill="url(#pg)"/><path d="M0.4,10 Q0.4,6.6 3.6,6.2 L6.4,6.2 Q9.6,6.6 9.6,10 Z" fill="#4a4a4a"/></svg>
<div class="t" style="left:677.70px;top:356.27px;font-size:8.3px;color:#414366;font-weight:normal;">SuperAdmin</div>
<div class="badge" style="left:899.25px;top:354.50px;width:42.5px;height:11.8px;border:1px solid #d4d4d4;color:#9c9c9c;background:#fff;line-height:10.2px;font-size:8px">Brouillon</div>
<div class="a" style="left:963.2px;top:356px;width:7.599999999999909px;height:7px;background:#fff;border:1px solid #a4a4a4;border-radius:1.6px;box-sizing:border-box"></div>
<div class="a" style="left:3px;top:372px;width:985.5px;height:22px;background:#fafafa;border-bottom:1px solid #ebebeb;box-sizing:border-box"></div>
<svg class="a" style="left:8.2px;top:377.5px;" width="6.8" height="8.2" viewBox="0 0 6.8 8.2"><path d="M0,0 L4.8,0 L6.8,2 L6.8,8.2 L0,8.2 Z" fill="#72a35c"/><rect x="1.2" y="1.2" width="1.8" height="0.8" fill="#e6f0e0"/><rect x="1.2" y="2.6" width="1.8" height="0.8" fill="#e6f0e0"/><text x="3.6" y="7.6" text-anchor="middle" font-family="Liberation Sans" font-weight="bold" font-size="4.6" fill="#e6f0e0">$</text></svg>
<div class="t" style="left:17.00px;top:378.27px;font-size:8.3px;color:#414366;font-weight:normal;">(PROV8)</div>
<div class="t" style="left:-68.10px;width:400px;text-align:center;top:378.27px;font-size:8.3px;color:#3d3d3d;font-weight:normal;">09/09/2021</div>
<div class="t" style="left:3.75px;width:400px;text-align:center;top:378.27px;font-size:8.3px;color:#3d3d3d;font-weight:normal;">10/09/2021</div>
<svg class="a" style="left:331.9px;top:377.9px;" width="7" height="7.6" viewBox="0 0 7 7.6"><rect x="0" y="0" width="7" height="7.6" fill="#6c6c9e"/><rect x="1.6" y="1" width="1" height="1" fill="#fff"/><rect x="4.4" y="1" width="1" height="1" fill="#fff"/><rect x="1.6" y="3" width="1" height="1" fill="#fff"/><rect x="4.4" y="3" width="1" height="1" fill="#fff"/><rect x="3" y="5.4" width="1" height="2.2" fill="#fff"/></svg>
<div class="t" style="left:341.50px;top:378.27px;font-size:8.3px;color:#414366;font-weight:normal;">tier_fournisseur_006</div>
<div class="t" style="right:404.50px;top:378.27px;font-size:8.3px;color:#44807a;font-weight:normal;">0,00</div>
<div class="t" style="right:346.00px;top:378.27px;font-size:8.3px;color:#44807a;font-weight:normal;">0,00</div>
<svg class="a" style="left:664.5px;top:377.6px;" width="10" height="10" viewBox="0 0 10 10"><defs><linearGradient id="pg" x1="0" y1="0" x2="0" y2="1"><stop offset="0" stop-color="#8a8a8a"/><stop offset="1" stop-color="#444"/></linearGradient></defs><ellipse cx="5" cy="3.1" rx="2.4" ry="3" fill="url(#pg)"/><path d="M0.4,10 Q0.4,6.6 3.6,6.2 L6.4,6.2 Q9.6,6.6 9.6,10 Z" fill="#4a4a4a"/></svg>
<div class="t" style="left:677.70px;top:378.27px;font-size:8.3px;color:#414366;font-weight:normal;">SuperAdmin</div>
<div class="badge" style="left:899.25px;top:376.50px;width:42.5px;height:11.8px;border:1px solid #d4d4d4;color:#9c9c9c;background:#fff;line-height:10.2px;font-size:8px">Brouillon</div>
<div class="a" style="left:963.2px;top:378px;width:7.599999999999909px;height:7px;background:#fff;border:1px solid #a4a4a4;border-radius:1.6px;box-sizing:border-box"></div>
<div class="a" style="left:3px;top:394px;width:985.5px;height:22px;background:#ffffff;border-bottom:1px solid #ebebeb;box-sizing:border-box"></div>
<svg class="a" style="left:8.2px;top:399.5px;" width="6.8" height="8.2" viewBox="0 0 6.8 8.2"><path d="M0,0 L4.8,0 L6.8,2 L6.8,8.2 L0,8.2 Z" fill="#72a35c"/><rect x="1.2" y="1.2" width="1.8" height="0.8" fill="#e6f0e0"/><rect x="1.2" y="2.6" width="1.8" height="0.8" fill="#e6f0e0"/><text x="3.6" y="7.6" text-anchor="middle" font-family="Liberation Sans" font-weight="bold" font-size="4.6" fill="#e6f0e0">$</text></svg>
<div class="t" style="left:17.00px;top:400.27px;font-size:8.3px;color:#414366;font-weight:normal;">(PROV7)</div>
<div class="t" style="left:-68.10px;width:400px;text-align:center;top:400.27px;font-size:8.3px;color:#3d3d3d;font-weight:normal;">09/09/2021</div>
<div class="t" style="left:3.75px;width:400px;text-align:center;top:400.27px;font-size:8.3px;color:#3d3d3d;font-weight:normal;">10/09/2021</div>
<svg class="a" style="left:331.9px;top:399.9px;" width="7" height="7.6" viewBox="0 0 7 7.6"><rect x="0" y="0" width="7" height="7.6" fill="#6c6c9e"/><rect x="1.6" y="1" width="1" height="1" fill="#fff"/><rect x="4.4" y="1" width="1" height="1" fill="#fff"/><rect x="1.6" y="3" width="1" height="1" fill="#fff"/><rect x="4.4" y="3" width="1" height="1" fill="#fff"/><rect x="3" y="5.4" width="1" height="2.2" fill="#fff"/></svg>
<div class="t" style="left:341.50px;top:400.27px;font-size:8.3px;color:#414366;font-weight:normal;">tier_fournisseur_006</div>
<div class="t" style="right:404.50px;top:400.27px;font-size:8.3px;color:#44807a;font-weight:normal;">0,00</div>
<div class="t" style="right:346.00px;top:400.27px;font-size:8.3px;color:#44807a;font-weight:normal;">0,00</div>
<svg class="a" style="left:664.5px;top:399.6px;" width="10" height="10" viewBox="0 0 10 10"><defs><linearGradient id="pg" x1="0" y1="0" x2="0" y2="1"><stop offset="0" stop-color="#8a8a8a"/><stop offset="1" stop-color="#444"/></linearGradient></defs><ellipse cx="5" cy="3.1" rx="2.4" ry="3" fill="url(#pg)"/><path d="M0.4,10 Q0.4,6.6 3.6,6.2 L6.4,6.2 Q9.6,6.6 9.6,10 Z" fill="#4a4a4a"/></svg>
<div class="t" style="left:677.70px;top:400.27px;font-size:8.3px;color:#414366;font-weight:normal;">SuperAdmin</div>
<div class="badge" style="left:899.25px;top:398.50px;width:42.5px;height:11.8px;border:1px solid #d4d4d4;color:#9c9c9c;background:#fff;line-height:10.2px;font-size:8px">Brouillon</div>
<div class="a" style="left:963.2px;top:400px;width:7.599999999999909px;height:7px;background:#fff;border:1px solid #a4a4a4;border-radius:1.6px;box-sizing:border-box"></div>
<div class="a" style="left:3px;top:416px;width:985.5px;height:22px;background:#fafafa;border-bottom:1px solid #ebebeb;box-sizing:border-box"></div>
<svg class="a" style="left:8.2px;top:421.5px;" width="6.8" height="8.2" viewBox="0 0 6.8 8.2"><path d="M0,0 L4.8,0 L6.8,2 L6.8,8.2 L0,8.2 Z" fill="#72a35c"/><rect x="1.2" y="1.2" width="1.8" height="0.8" fill="#e6f0e0"/><rect x="1.2" y="2.6" width="1.8" height="0.8" fill="#e6f0e0"/><text x="3.6" y="7.6" text-anchor="middle" font-family="Liberation Sans" font-weight="bold" font-size="4.6" fill="#e6f0e0">$</text></svg>
<div class="t" style="left:17.00px;top:422.27px;font-size:8.3px;color:#414366;font-weight:normal;">(PROV6)</div>
<div class="t" style="left:-68.10px;width:400px;text-align:center;top:422.27px;font-size:8.3px;color:#3d3d3d;font-weight:normal;">09/09/2021</div>
<div class="t" style="left:3.75px;width:400px;text-align:center;top:422.27px;font-size:8.3px;color:#3d3d3d;font-weight:normal;">10/09/2021</div>
<svg class="a" style="left:331.9px;top:421.9px;" width="7" height="7.6" viewBox="0 0 7 7.6"><rect x="0" y="0" width="7" height="7.6" fill="#6c6c9e"/><rect x="1.6" y="1" width="1" height="1" fill="#fff"/><rect x="4.4" y="1" width="1" height="1" fill="#fff"/><rect x="1.6" y="3" width="1" height="1" fill="#fff"/><rect x="4.4" y="3" width="1" height="1" fill="#fff"/><rect x="3" y="5.4" width="1" height="2.2" fill="#fff"/></svg>
<div class="t" style="left:341.50px;top:422.27px;font-size:8.3px;color:#414366;font-weight:normal;">tier_fournisseur_004</div>
<div class="t" style="right:404.50px;top:422.27px;font-size:8.3px;color:#44807a;font-weight:normal;">0,00</div>
<div class="t" style="right:346.00px;top:422.27px;font-size:8.3px;color:#44807a;font-weight:normal;">0,00</div>
<svg class="a" style="left:664.5px;top:421.6px;" width="10" height="10" viewBox="0 0 10 10"><defs><linearGradient id="pg" x1="0" y1="0" x2="0" y2="1"><stop offset="0" stop-color="#8a8a8a"/><stop offset="1" stop-color="#444"/></linearGradient></defs><ellipse cx="5" cy="3.1" rx="2.4" ry="3" fill="url(#pg)"/><path d="M0.4,10 Q0.4,6.6 3.6,6.2 L6.4,6.2 Q9.6,6.6 9.6,10 Z" fill="#4a4a4a"/></svg>
<div class="t" style="left:677.70px;top:422.27px;font-size:8.3px;color:#414366;font-weight:normal;">SuperAdmin</div>
<div class="badge" style="left:899.25px;top:420.50px;width:42.5px;height:11.8px;border:1px solid #d4d4d4;color:#9c9c9c;background:#fff;line-height:10.2px;font-size:8px">Brouillon</div>
<div class="a" style="left:963.2px;top:422px;width:7.599999999999909px;height:7px;background:#fff;border:1px solid #a4a4a4;border-radius:1.6px;box-sizing:border-box"></div>
<div class="a" style="left:3px;top:438px;width:985.5px;height:22px;background:#ffffff;border-bottom:1px solid #ebebeb;box-sizing:border-box"></div>
<svg class="a" style="left:8.2px;top:443.5px;" width="6.8" height="8.2" viewBox="0 0 6.8 8.2"><path d="M0,0 L4.8,0 L6.8,2 L6.8,8.2 L0,8.2 Z" fill="#72a35c"/><rect x="1.2" y="1.2" width="1.8" height="0.8" fill="#e6f0e0"/><rect x="1.2" y="2.6" width="1.8" height="0.8" fill="#e6f0e0"/><text x="3.6" y="7.6" text-anchor="middle" font-family="Liberation Sans" font-weight="bold" font-size="4.6" fill="#e6f0e0">$</text></svg>
<div class="t" style="left:17.00px;top:444.27px;font-size:8.3px;color:#414366;font-weight:normal;">(PROV5)</div>
<svg class="a" style="left:52.1036px;top:444.5px;" width="8.4" height="7.4" viewBox="0 0 8.4 7.4"><path d="M3.3,0 L5.1,0 L5.1,3 L6.9,3 L4.2,5.6 L1.5,3 L3.3,3 Z" fill="#8c8c8c"/><path d="M0,5 L2.6,5 L4.2,6.3 L5.8,5 L8.4,5 L8.4,7.4 L0,7.4 Z" fill="#8c8c8c"/></svg>
<div class="t" style="left:-68.10px;width:400px;text-align:center;top:444.27px;font-size:8.3px;color:#3d3d3d;font-weight:normal;">09/09/2021</div>
<div class="t" style="left:3.75px;width:400px;text-align:center;top:444.27px;font-size:8.3px;color:#3d3d3d;font-weight:normal;">10/09/2021</div>
<svg class="a" style="left:331.9px;top:443.9px;" width="7" height="7.6" viewBox="0 0 7 7.6"><rect x="0" y="0" width="7" height="7.6" fill="#6c6c9e"/><rect x="1.6" y="1" width="1" height="1" fill="#fff"/><rect x="4.4" y="1" width="1" height="1" fill="#fff"/><rect x="1.6" y="3" width="1" height="1" fill="#fff"/><rect x="4.4" y="3" width="1" height="1" fill="#fff"/><rect x="3" y="5.4" width="1" height="2.2" fill="#fff"/></svg>
<div class="t" style="left:341.50px;top:444.27px;font-size:8.3px;color:#414366;font-weight:normal;">Tier_fournisseur_001</div>
<div class="t" style="right:404.50px;top:444.27px;font-size:8.3px;color:#44807a;font-weight:normal;">13 700,00</div>
<div class="t" style="right:346.00px;top:444.27px;font-size:8.3px;color:#44807a;font-weight:normal;">16 440,00</div>
<svg class="a" style="left:664.5px;top:443.6px;" width="10" height="10" viewBox="0 0 10 10"><defs><linearGradient id="pg" x1="0" y1="0" x2="0" y2="1"><stop offset="0" stop-color="#8a8a8a"/><stop offset="1" stop-color="#444"/></linearGradient></defs><ellipse cx="5" cy="3.1" rx="2.4" ry="3" fill="url(#pg)"/><path d="M0.4,10 Q0.4,6.6 3.6,6.2 L6.4,6.2 Q9.6,6.6 9.6,10 Z" fill="#4a4a4a"/></svg>
<div class="t" style="left:677.70px;top:444.27px;font-size:8.3px;color:#414366;font-weight:normal;">SuperAdmin</div>
<div class="badge" style="left:899.25px;top:442.50px;width:42.5px;height:11.8px;border:1px solid #d4d4d4;color:#9c9c9c;background:#fff;line-height:10.2px;font-size:8px">Brouillon</div>
<div class="a" style="left:963.2px;top:444px;width:7.599999999999909px;height:7px;background:#fff;border:1px solid #a4a4a4;border-radius:1.6px;box-sizing:border-box"></div>
<div class="a" style="left:3px;top:460px;width:985.5px;height:22px;background:#fafafa;border-bottom:1px solid #ebebeb;box-sizing:border-box"></div>
<svg class="a" style="left:8.2px;top:465.5px;" width="6.8" height="8.2" viewBox="0 0 6.8 8.2"><path d="M0,0 L4.8,0 L6.8,2 L6.8,8.2 L0,8.2 Z" fill="#72a35c"/><rect x="1.2" y="1.2" width="1.8" height="0.8" fill="#e6f0e0"/><rect x="1.2" y="2.6" width="1.8" height="0.8" fill="#e6f0e0"/><text x="3.6" y="7.6" text-anchor="middle" font-family="Liberation Sans" font-weight="bold" font-size="4.6" fill="#e6f0e0">$</text></svg>
<div class="t" style="left:17.00px;top:466.27px;font-size:8.3px;color:#414366;font-weight:normal;">AV2107-0001</div>
<svg class="a" style="left:68.7119px;top:466.5px;" width="8.4" height="7.4" viewBox="0 0 8.4 7.4"><path d="M3.3,0 L5.1,0 L5.1,3 L6.9,3 L4.2,5.6 L1.5,3 L3.3,3 Z" fill="#8c8c8c"/><path d="M0,5 L2.6,5 L4.2,6.3 L5.8,5 L8.4,5 L8.4,7.4 L0,7.4 Z" fill="#8c8c8c"/></svg>
<div class="t" style="left:-68.10px;width:400px;text-align:center;top:466.27px;font-size:8.3px;color:#3d3d3d;font-weight:normal;">17/07/2021</div>
<div class="t" style="left:177.48px;top:466.27px;font-size:8.3px;color:#3d3d3d;font-weight:normal;">17/07/2021</div>
<svg class="a" style="left:220.8166px;top:465.8px;" width="9.6" height="8" viewBox="0 0 9.6 8"><path d="M4.8,0.4 L9.3,7.7 L0.3,7.7 Z" fill="#c9a43a" stroke="#c9a43a" stroke-width="0.7" stroke-linejoin="round"/><rect x="4.3" y="2.6" width="1" height="2.8" fill="#fff"/><rect x="4.3" y="6" width="1" height="1" fill="#fff"/></svg>
<svg class="a" style="left:239.6px;top:466.9px;" width="9.2" height="6.4" viewBox="0 0 9.2 6.4"><rect x="0" y="0" width="2.4" height="2.2" fill="#505070"/><rect x="6.8" y="0" width="2.4" height="2.2" fill="#505070"/><rect x="3.2" y="4.2" width="2.4" height="2.2" fill="#505070"/><path d="M2.2,1.1 L7,1.1 M1.4,1.8 L4,4.6" stroke="#505070" stroke-width="0.8"/></svg>
<div class="t" style="left:250.80px;top:466.27px;font-size:8.3px;color:#414366;font-weight:normal;">PJ2107-0001_projet</div>
<svg class="a" style="left:331.9px;top:465.9px;" width="7" height="7.6" viewBox="0 0 7 7.6"><rect x="0" y="0" width="7" height="7.6" fill="#6c6c9e"/><rect x="1.6" y="1" width="1" height="1" fill="#fff"/><rect x="4.4" y="1" width="1" height="1" fill="#fff"/><rect x="1.6" y="3" width="1" height="1" fill="#fff"/><rect x="4.4" y="3" width="1" height="1" fill="#fff"/><rect x="3" y="5.4" width="1" height="2.2" fill="#fff"/></svg>
<div class="t" style="left:341.50px;top:466.27px;font-size:8.3px;color:#414366;font-weight:normal;">Tier_0002</div>
<div class="t" style="right:404.50px;top:466.27px;font-size:8.3px;color:#44807a;font-weight:normal;">-151 200,00</div>
<div class="t" style="right:346.00px;top:466.27px;font-size:8.3px;color:#44807a;font-weight:normal;">-181 440,00</div>
<svg class="a" style="left:664.5px;top:465.6px;" width="10" height="10" viewBox="0 0 10 10"><defs><linearGradient id="pg" x1="0" y1="0" x2="0" y2="1"><stop offset="0" stop-color="#8a8a8a"/><stop offset="1" stop-color="#444"/></linearGradient></defs><ellipse cx="5" cy="3.1" rx="2.4" ry="3" fill="url(#pg)"/><path d="M0.4,10 Q0.4,6.6 3.6,6.2 L6.4,6.2 Q9.6,6.6 9.6,10 Z" fill="#4a4a4a"/></svg>
<div class="t" style="left:677.70px;top:466.27px;font-size:8.3px;color:#414366;font-weight:normal;">SuperAdmin</div>
<div class="t" style="right:209.00px;top:466.27px;font-size:8.3px;color:#444;font-weight:normal;">848297</div>
<div class="t" style="left:801.25px;top:466.27px;font-size:8.3px;color:#444;font-weight:normal;">784178</div>
<div class="badge" style="left:886.75px;top:463.70px;width:55px;height:13px;border:1px solid #cfc06a;color:#2e2e38;background:#fff;line-height:11.2px;font-size:8px">Commencée</div>
<div class="a" style="left:963.2px;top:466px;width:7.599999999999909px;height:7px;background:#fff;border:1px solid #a4a4a4;border-radius:1.6px;box-sizing:border-box"></div>
<div class="a" style="left:3px;top:482px;width:985.5px;height:22px;background:#ffffff;border-bottom:1px solid #ebebeb;box-sizing:border-box"></div>
<svg class="a" style="left:8.2px;top:487.5px;" width="6.8" height="8.2" viewBox="0 0 6.8 8.2"><path d="M0,0 L4.8,0 L6.8,2 L6.8,8.2 L0,8.2 Z" fill="#72a35c"/><rect x="1.2" y="1.2" width="1.8" height="0.8" fill="#e6f0e0"/><rect x="1.2" y="2.6" width="1.8" height="0.8" fill="#e6f0e0"/><text x="3.6" y="7.6" text-anchor="middle" font-family="Liberation Sans" font-weight="bold" font-size="4.6" fill="#e6f0e0">$</text></svg>
<div class="t" style="left:17.00px;top:488.27px;font-size:8.3px;color:#414366;font-weight:normal;">FA2107-0003</div>
<svg class="a" style="left:68.7119px;top:488.5px;" width="8.4" height="7.4" viewBox="0 0 8.4 7.4"><path d="M3.3,0 L5.1,0 L5.1,3 L6.9,3 L4.2,5.6 L1.5,3 L3.3,3 Z" fill="#8c8c8c"/><path d="M0,5 L2.6,5 L4.2,6.3 L5.8,5 L8.4,5 L8.4,7.4 L0,7.4 Z" fill="#8c8c8c"/></svg>
<div class="t" style="left:-68.10px;width:400px;text-align:center;top:488.27px;font-size:8.3px;color:#3d3d3d;font-weight:normal;">17/07/2021</div>
<div class="t" style="left:177.48px;top:488.27px;font-size:8.3px;color:#3d3d3d;font-weight:normal;">18/07/2021</div>
<svg class="a" style="left:220.8166px;top:487.8px;" width="9.6" height="8" viewBox="0 0 9.6 8"><path d="M4.8,0.4 L9.3,7.7 L0.3,7.7 Z" fill="#c9a43a" stroke="#c9a43a" stroke-width="0.7" stroke-linejoin="round"/><rect x="4.3" y="2.6" width="1" height="2.8" fill="#fff"/><rect x="4.3" y="6" width="1" height="1" fill="#fff"/></svg>
<svg class="a" style="left:239.6px;top:488.9px;" width="9.2" height="6.4" viewBox="0 0 9.2 6.4"><rect x="0" y="0" width="2.4" height="2.2" fill="#505070"/><rect x="6.8" y="0" width="2.4" height="2.2" fill="#505070"/><rect x="3.2" y="4.2" width="2.4" height="2.2" fill="#505070"/><path d="M2.2,1.1 L7,1.1 M1.4,1.8 L4,4.6" stroke="#505070" stroke-width="0.8"/></svg>
<div class="t" style="left:250.80px;top:488.27px;font-size:8.3px;color:#414366;font-weight:normal;">PJ2107-0001_projet</div>
<svg class="a" style="left:331.9px;top:487.9px;" width="7" height="7.6" viewBox="0 0 7 7.6"><rect x="0" y="0" width="7" height="7.6" fill="#6c6c9e"/><rect x="1.6" y="1" width="1" height="1" fill="#fff"/><rect x="4.4" y="1" width="1" height="1" fill="#fff"/><rect x="1.6" y="3" width="1" height="1" fill="#fff"/><rect x="4.4" y="3" width="1" height="1" fill="#fff"/><rect x="3" y="5.4" width="1" height="2.2" fill="#fff"/></svg>
<div class="t" style="left:341.50px;top:488.27px;font-size:8.3px;color:#414366;font-weight:normal;">Tier_fournisseur_001</div>
<div class="t" style="right:404.50px;top:488.27px;font-size:8.3px;color:#44807a;font-weight:normal;">1 164 000,00</div>
<div class="t" style="right:346.00px;top:488.27px;font-size:8.3px;color:#44807a;font-weight:normal;">1 396 800,00</div>
<svg class="a" style="left:664.5px;top:487.6px;" width="10" height="10" viewBox="0 0 10 10"><defs><linearGradient id="pg" x1="0" y1="0" x2="0" y2="1"><stop offset="0" stop-color="#8a8a8a"/><stop offset="1" stop-color="#444"/></linearGradient></defs><ellipse cx="5" cy="3.1" rx="2.4" ry="3" fill="url(#pg)"/><path d="M0.4,10 Q0.4,6.6 3.6,6.2 L6.4,6.2 Q9.6,6.6 9.6,10 Z" fill="#4a4a4a"/></svg>
<div class="t" style="left:677.70px;top:488.27px;font-size:8.3px;color:#414366;font-weight:normal;">SuperAdmin</div>
<div class="t" style="right:209.00px;top:488.27px;font-size:8.3px;color:#444;font-weight:normal;">84035</div>
<div class="t" style="left:801.25px;top:488.27px;font-size:8.3px;color:#444;font-weight:normal;">35087</div>
<div class="badge" style="left:886.75px;top:485.70px;width:55px;height:13px;border:1px solid #cfc06a;color:#2e2e38;background:#fff;line-height:11.2px;font-size:8px">Commencée</div>
<div class="a" style="left:963.2px;top:488px;width:7.599999999999909px;height:7px;background:#fff;border:1px solid #a4a4a4;border-radius:1.6px;box-sizing:border-box"></div>
<div class="a" style="left:3px;top:504px;width:985.5px;height:22px;background:#fafafa;border-bottom:1px solid #ebebeb;box-sizing:border-box"></div>
<svg class="a" style="left:8.2px;top:509.5px;" width="6.8" height="8.2" viewBox="0 0 6.8 8.2"><path d="M0,0 L4.8,0 L6.8,2 L6.8,8.2 L0,8.2 Z" fill="#72a35c"/><rect x="1.2" y="1.2" width="1.8" height="0.8" fill="#e6f0e0"/><rect x="1.2" y="2.6" width="1.8" height="0.8" fill="#e6f0e0"/><text x="3.6" y="7.6" text-anchor="middle" font-family="Liberation Sans" font-weight="bold" font-size="4.6" fill="#e6f0e0">$</text></svg>
<div class="t" style="left:17.00px;top:510.27px;font-size:8.3px;color:#414366;font-weight:normal;">FA2107-0002</div>
<svg class="a" style="left:69.4119px;top:510.2px;" width="7.2" height="7" viewBox="0 0 7.2 7"><path d="M0.5,0.5 L6.7,0.5 L6.7,4.6 L4.6,6.5 L0.5,6.5 Z M4.6,6.5 L4.6,4.6 L6.7,4.6" fill="none" stroke="#888" stroke-width="0.8"/></svg>
<svg class="a" style="left:77.7119px;top:510.5px;" width="8.4" height="7.4" viewBox="0 0 8.4 7.4"><path d="M3.3,0 L5.1,0 L5.1,3 L6.9,3 L4.2,5.6 L1.5,3 L3.3,3 Z" fill="#8c8c8c"/><path d="M0,5 L2.6,5 L4.2,6.3 L5.8,5 L8.4,5 L8.4,7.4 L0,7.4 Z" fill="#8c8c8c"/></svg>
<div class="t" style="left:-68.10px;width:400px;text-align:center;top:510.27px;font-size:8.3px;color:#3d3d3d;font-weight:normal;">17/07/2021</div>
<div class="t" style="left:177.48px;top:510.27px;font-size:8.3px;color:#3d3d3d;font-weight:normal;">18/07/2021</div>
<svg class="a" style="left:220.8166px;top:509.8px;" width="9.6" height="8" viewBox="0 0 9.6 8"><path d="M4.8,0.4 L9.3,7.7 L0.3,7.7 Z" fill="#c9a43a" stroke="#c9a43a" stroke-width="0.7" stroke-linejoin="round"/><rect x="4.3" y="2.6" width="1" height="2.8" fill="#fff"/><rect x="4.3" y="6" width="1" height="1" fill="#fff"/></svg>
<svg class="a" style="left:239.6px;top:510.9px;" width="9.2" height="6.4" viewBox="0 0 9.2 6.4"><rect x="0" y="0" width="2.4" height="2.2" fill="#505070"/><rect x="6.8" y="0" width="2.4" height="2.2" fill="#505070"/><rect x="3.2" y="4.2" width="2.4" height="2.2" fill="#505070"/><path d="M2.2,1.1 L7,1.1 M1.4,1.8 L4,4.6" stroke="#505070" stroke-width="0.8"/></svg>
<div class="t" style="left:250.80px;top:510.27px;font-size:8.3px;color:#414366;font-weight:normal;">PJ2107-0001_projet</div>
<svg class="a" style="left:331.9px;top:509.9px;" width="7" height="7.6" viewBox="0 0 7 7.6"><rect x="0" y="0" width="7" height="7.6" fill="#6c6c9e"/><rect x="1.6" y="1" width="1" height="1" fill="#fff"/><rect x="4.4" y="1" width="1" height="1" fill="#fff"/><rect x="1.6" y="3" width="1" height="1" fill="#fff"/><rect x="4.4" y="3" width="1" height="1" fill="#fff"/><rect x="3" y="5.4" width="1" height="2.2" fill="#fff"/></svg>
<div class="t" style="left:341.50px;top:510.27px;font-size:8.3px;color:#414366;font-weight:normal;">Tier_fournisseur_001</div>
<div class="t" style="right:404.50px;top:510.27px;font-size:8.3px;color:#44807a;font-weight:normal;">5 000,00</div>
<div class="t" style="right:346.00px;top:510.27px;font-size:8.3px;color:#44807a;font-weight:normal;">6 000,00</div>
<svg class="a" style="left:664.5px;top:509.6px;" width="10" height="10" viewBox="0 0 10 10"><defs><linearGradient id="pg" x1="0" y1="0" x2="0" y2="1"><stop offset="0" stop-color="#8a8a8a"/><stop offset="1" stop-color="#444"/></linearGradient></defs><ellipse cx="5" cy="3.1" rx="2.4" ry="3" fill="url(#pg)"/><path d="M0.4,10 Q0.4,6.6 3.6,6.2 L6.4,6.2 Q9.6,6.6 9.6,10 Z" fill="#4a4a4a"/></svg>
<div class="t" style="left:677.70px;top:510.27px;font-size:8.3px;color:#414366;font-weight:normal;">SuperAdmin</div>
<div class="t" style="right:209.00px;top:510.27px;font-size:8.3px;color:#444;font-weight:normal;">120</div>
<div class="t" style="left:801.25px;top:510.27px;font-size:8.3px;color:#444;font-weight:normal;">300</div>
<div class="badge" style="left:886.75px;top:507.70px;width:55px;height:13px;border:1px solid #cfc06a;color:#2e2e38;background:#fff;line-height:11.2px;font-size:8px">Commencée</div>
<div class="a" style="left:963.2px;top:510px;width:7.599999999999909px;height:7px;background:#fff;border:1px solid #a4a4a4;border-radius:1.6px;box-sizing:border-box"></div>
<div class="a" style="left:3px;top:526px;width:985.5px;height:22px;background:#ffffff;border-bottom:1px solid #ebebeb;box-sizing:border-box"></div>
<svg class="a" style="left:8.2px;top:531.5px;" width="6.8" height="8.2" viewBox="0 0 6.8 8.2"><path d="M0,0 L4.8,0 L6.8,2 L6.8,8.2 L0,8.2 Z" fill="#72a35c"/><rect x="1.2" y="1.2" width="1.8" height="0.8" fill="#e6f0e0"/><rect x="1.2" y="2.6" width="1.8" height="0.8" fill="#e6f0e0"/><text x="3.6" y="7.6" text-anchor="middle" font-family="Liberation Sans" font-weight="bold" font-size="4.6" fill="#e6f0e0">$</text></svg>
<div class="t" style="left:17.00px;top:532.27px;font-size:8.3px;color:#414366;font-weight:normal;">FA2107-0001</div>
<svg class="a" style="left:68.7119px;top:532.5px;" width="8.4" height="7.4" viewBox="0 0 8.4 7.4"><path d="M3.3,0 L5.1,0 L5.1,3 L6.9,3 L4.2,5.6 L1.5,3 L3.3,3 Z" fill="#8c8c8c"/><path d="M0,5 L2.6,5 L4.2,6.3 L5.8,5 L8.4,5 L8.4,7.4 L0,7.4 Z" fill="#8c8c8c"/></svg>
<div class="t" style="left:-68.10px;width:400px;text-align:center;top:532.27px;font-size:8.3px;color:#3d3d3d;font-weight:normal;">15/07/2021</div>
<div class="t" style="left:3.75px;width:400px;text-align:center;top:532.27px;font-size:8.3px;color:#3d3d3d;font-weight:normal;">16/07/2021</div>
<svg class="a" style="left:331.9px;top:531.9px;" width="7" height="7.6" viewBox="0 0 7 7.6"><rect x="0" y="0" width="7" height="7.6" fill="#6c6c9e"/><rect x="1.6" y="1" width="1" height="1" fill="#fff"/><rect x="4.4" y="1" width="1" height="1" fill="#fff"/><rect x="1.6" y="3" width="1" height="1" fill="#fff"/><rect x="4.4" y="3" width="1" height="1" fill="#fff"/><rect x="3" y="5.4" width="1" height="2.2" fill="#fff"/></svg>
<div class="t" style="left:341.50px;top:532.27px;font-size:8.3px;color:#414366;font-weight:normal;">Tier_0002</div>
<div class="t" style="right:404.50px;top:532.27px;font-size:8.3px;color:#44807a;font-weight:normal;">400,00</div>
<div class="t" style="right:346.00px;top:532.27px;font-size:8.3px;color:#44807a;font-weight:normal;">480,00</div>
<svg class="a" style="left:664.5px;top:531.6px;" width="10" height="10" viewBox="0 0 10 10"><defs><linearGradient id="pg" x1="0" y1="0" x2="0" y2="1"><stop offset="0" stop-color="#8a8a8a"/><stop offset="1" stop-color="#444"/></linearGradient></defs><ellipse cx="5" cy="3.1" rx="2.4" ry="3" fill="url(#pg)"/><path d="M0.4,10 Q0.4,6.6 3.6,6.2 L6.4,6.2 Q9.6,6.6 9.6,10 Z" fill="#4a4a4a"/></svg>
<div class="t" style="left:677.70px;top:532.27px;font-size:8.3px;color:#414366;font-weight:normal;">SuperAdmin</div>
<div class="badge" style="left:911.25px;top:530.20px;width:30.5px;height:12.4px;border:1px solid #d3d7d7;color:#8c9292;background:#d3d7d7;line-height:10.6px">Payée</div>
<div class="a" style="left:963.2px;top:532px;width:7.599999999999909px;height:7px;background:#fff;border:1px solid #a4a4a4;border-radius:1.6px;box-sizing:border-box"></div>
<div class="a" style="left:3px;top:548px;width:985.5px;height:18px;background:#f8f8f8"></div>
<div class="t" style="left:9.30px;top:553.87px;font-size:8.3px;color:#999;font-weight:normal;">Total</div>
<div class="t" style="right:404.50px;top:553.87px;font-size:8.3px;color:#999;font-weight:normal;">1 031 900,00</div>
<div class="t" style="right:346.00px;top:553.87px;font-size:8.3px;color:#999;font-weight:normal;">1 238 280,00</div>
<div class="a" style="left:257px;top:106.7px;width:123.20px;height:293.30px;background:#f9f9f9;box-shadow:0 1.5px 4px rgba(0,0,0,0.3);overflow:hidden"><div class="t" style="left:16.80px;top:7.97px;font-size:7.6px;color:#333;font-weight:bold">Factures clients</div><div class="t" style="left:5.60px;top:23.37px;font-size:7.6px;color:#333;font-weight:normal">Nouvelle facture</div><div class="t" style="left:5.60px;top:37.27px;font-size:7.6px;color:#333;font-weight:normal">Liste</div><div class="t" style="left:11.80px;top:51.17px;font-size:7.6px;color:#333;font-weight:normal">Brouillon</div><div class="t" style="left:11.80px;top:65.07px;font-size:7.6px;color:#333;font-weight:normal">Impayée</div><div class="t" style="left:11.80px;top:78.97px;font-size:7.6px;color:#333;font-weight:normal">Payée</div><div class="t" style="left:11.80px;top:92.87px;font-size:7.6px;color:#333;font-weight:normal">Abandonnée</div><div class="t" style="left:5.60px;top:106.77px;font-size:7.6px;color:#333;font-weight:normal">Liste des modèles</div><div class="t" style="left:5.60px;top:120.67px;font-size:7.6px;color:#333;font-weight:normal">Règlements</div><div class="t" style="left:11.80px;top:134.57px;font-size:7.6px;color:#333;font-weight:normal">Rapports</div><div class="t" style="left:5.60px;top:148.47px;font-size:7.6px;color:#333;font-weight:normal">Statistiques</div><div class="t" style="left:16.80px;top:171.77px;font-size:7.6px;color:#333;font-weight:bold">Factures fournisseur</div><div class="t" style="left:5.60px;top:187.07px;font-size:7.6px;color:#333;font-weight:normal">Nouvelle facture</div><div class="t" style="left:5.60px;top:200.97px;font-size:7.6px;color:#333;font-weight:normal">Liste</div><div class="t" style="left:11.80px;top:214.87px;font-size:7.6px;color:#333;font-weight:normal">Brouillon</div><div class="t" style="left:11.80px;top:228.77px;font-size:7.6px;color:#333;font-weight:normal">Impayée</div><div class="t" style="left:11.80px;top:242.67px;font-size:7.6px;color:#333;font-weight:normal">Payée</div><div class="t" style="left:5.60px;top:256.57px;font-size:7.6px;color:#333;font-weight:normal">Règlements</div><div class="t" style="left:11.80px;top:270.47px;font-size:7.6px;color:#333;font-weight:normal">Rapports</div><div class="t" style="left:5.60px;top:284.37px;font-size:7.6px;color:#333;font-weight:normal">Statistiques</div><svg class="a" style="left:4.90px;top:7.80px" width="6.4" height="7.8" viewBox="0 0 6.4 7.8"><path d="M0,0 L4.3,0 L6.4,2.1 L6.4,7.8 L0,7.8 Z" fill="#6aa84f"/><path d="M4.3,0 L4.3,2.1 L6.4,2.1 Z" fill="#cfe6c4"/><text x="3.2" y="7.1" text-anchor="middle" font-family="Liberation Sans" font-weight="bold" font-size="4.8" fill="#fff">$</text></svg><svg class="a" style="left:4.90px;top:172.10px" width="6.4" height="7.8" viewBox="0 0 6.4 7.8"><path d="M0,0 L4.3,0 L6.4,2.1 L6.4,7.8 L0,7.8 Z" fill="#5d9fb5"/><path d="M4.3,0 L4.3,2.1 L6.4,2.1 Z" fill="#cfe3ea"/><text x="3.2" y="7.1" text-anchor="middle" font-family="Liberation Sans" font-weight="bold" font-size="4.8" fill="#fff">$</text></svg><div class="a" style="left:0;top:163.30px;width:113px;height:1px;background:#ececec"></div><div class="a" style="left:113.20px;top:0;width:8.6px;height:293.30px;background:#f1f1f1"></div><div class="a" style="left:113.60px;top:10.30px;width:8px;height:183.50px;background:#c1c1c1"></div><svg class="a" style="left:115.20px;top:3.80px" width="5" height="3" viewBox="0 0 5 3"><path d="M0,3 L2.5,0 L5,3 Z" fill="#a3a3a3"/></svg><svg class="a" style="left:115.20px;top:286.50px" width="5" height="3" viewBox="0 0 5 3"><path d="M0,0 L2.5,3 L5,0 Z" fill="#505050"/></svg></div></div></body></html>
